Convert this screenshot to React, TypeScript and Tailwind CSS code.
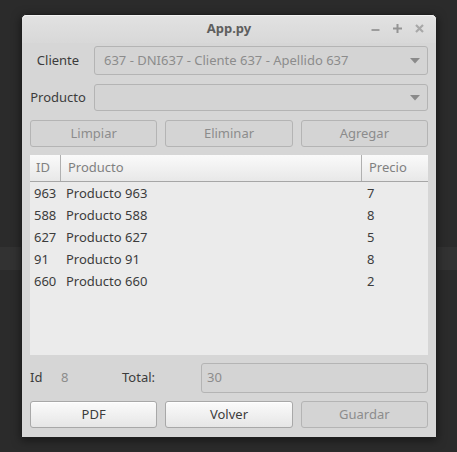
import { FC, ReactNode } from "react";

const rows = [
  { id: "963", name: "Producto 963", price: "7" },
  { id: "588", name: "Producto 588", price: "8" },
  { id: "627", name: "Producto 627", price: "5" },
  { id: "91", name: "Producto 91", price: "8" },
  { id: "660", name: "Producto 660", price: "2" },
];

const Caret = () => (
  <svg width="10" height="6" viewBox="0 0 10 6" className="mr-[7px]">
    <path d="M0 0h10L5 5.5z" fill="#8a8a8a" />
  </svg>
);

const Combo: FC<{ value?: string; h: string }> = ({ value, h }) => (
  <div
    className={`flex flex-1 items-center justify-between rounded-[3px] border border-[#b4b4b4] bg-[#d4d4d4] pl-[9px] ${h}`}
  >
    <span className="text-[#8c8c8c]">{value}</span>
    <Caret />
  </div>
);

const Btn: FC<{ children: ReactNode; disabled?: boolean }> = ({
  children,
  disabled,
}) =>
  disabled ? (
    <div className="flex h-[27px] items-center justify-center rounded-[3px] border border-[#b4b4b4] bg-[#d4d4d4] text-[#8c8c8c]">
      {children}
    </div>
  ) : (
    <div className="flex h-[27px] items-center justify-center rounded-[3px] border border-[#a8a8a8] bg-gradient-to-b from-[#fbfbfb] to-[#e6e6e6] text-[#3c3c3c] shadow-[inset_0_1px_0_#ffffff]">
      {children}
    </div>
  );

// window controls: minimise, maximise, close
const Controls = () => (
  <div className="absolute right-[12px] top-[9px] flex items-center gap-[13px]">
    <svg width="9" height="9" viewBox="0 0 9 9">
      <path d="M0.5 6h8" stroke="#9c9c9c" strokeWidth="2" />
    </svg>
    <svg width="9" height="9" viewBox="0 0 9 9">
      <path d="M0 4.5h9M4.5 0v9" stroke="#949494" strokeWidth="2" />
    </svg>
    <svg width="9" height="9" viewBox="0 0 9 9">
      <path d="M1 1l7 7M8 1L1 8" stroke="#a8a8a8" strokeWidth="2.2" />
    </svg>
  </div>
);

export default function App() {
  return (
    <div
      className="relative h-[452px] w-[457px] overflow-hidden bg-[#2b2b2b] text-[13px] text-[#3c3c3c]"
      style={{ fontFamily: '"Noto Sans", "DejaVu Sans", sans-serif' }}
    >
      {/* desktop band behind the window */}
      <div className="mt-[247px] h-[23px] w-full bg-[#323232]" />

      {/* Window */}
      <div className="absolute left-[21px] top-[14px] flex h-[424px] w-[416px] flex-col rounded-t-[5px] border border-[#1e1e1e] bg-[#d6d6d6] shadow-[0_2px_10px_rgba(0,0,0,0.5)]">
        {/* Title bar */}
        <div className="relative flex h-[28px] items-center justify-center rounded-t-[5px] bg-gradient-to-b from-[#e2e2e2] to-[#d8d8d8] shadow-[inset_0_1px_0_#f2f2f2]">
          <span className="font-bold text-[#5e5e5e]">App.py</span>
          <Controls />
        </div>

        {/* Body */}
        <div className="flex flex-1 flex-col px-[8px] pt-[3px]">
          <div className="flex items-center gap-[8px]">
            <span className="w-[56px] text-center">Cliente</span>
            <Combo h="h-[29px]" value="637 - DNI637 - Cliente 637 - Apellido 637" />
          </div>

          <div className="mt-[9px] flex items-center gap-[8px]">
            <span className="w-[56px] text-center">Producto</span>
            <Combo h="h-[27px]" />
          </div>

          <div className="mt-[9px] grid grid-cols-3 gap-[8px]">
            <Btn disabled>Limpiar</Btn>
            <Btn disabled>Eliminar</Btn>
            <Btn disabled>Agregar</Btn>
          </div>

          {/* Table */}
          <div className="mt-[8px] h-[200px] bg-[#ebebeb]">
            <div className="flex h-[27px] border-b border-[#a6a6a6] bg-gradient-to-b from-[#fafafa] to-[#e8e8e8] text-[#808080]">
              <div className="flex w-[31px] items-center border-r border-[#b0b0b0] pl-[6px]">
                ID
              </div>
              <div className="flex flex-1 items-center border-r border-[#b0b0b0] pl-[7px]">
                Producto
              </div>
              <div className="flex w-[66px] items-center pl-[7px]">Precio</div>
            </div>
            <div className="pt-[1px]">
              {rows.map((r) => (
                <div key={r.id} className="flex h-[22px] items-center">
                  <span className="w-[36px] pl-[4px]">{r.id}</span>
                  <span className="flex-1">{r.name}</span>
                  <span className="w-[61px]">{r.price}</span>
                </div>
              ))}
            </div>
          </div>

          {/* Footer */}
          <div className="mt-[8px] flex h-[30px] items-center">
            <span className="w-[31px]">Id</span>
            <span className="w-[61px] text-[#8c8c8c]">8</span>
            <span className="w-[79px]">Total:</span>
            <div className="flex h-[30px] flex-1 items-center rounded-[3px] border border-[#b4b4b4] bg-[#d4d4d4] pl-[5px] text-[#8c8c8c]">
              30
            </div>
          </div>

          <div className="mt-[8px] grid grid-cols-3 gap-[8px]">
            <Btn>PDF</Btn>
            <Btn>Volver</Btn>
            <Btn disabled>Guardar</Btn>
          </div>
        </div>
      </div>
    </div>
  );
}
